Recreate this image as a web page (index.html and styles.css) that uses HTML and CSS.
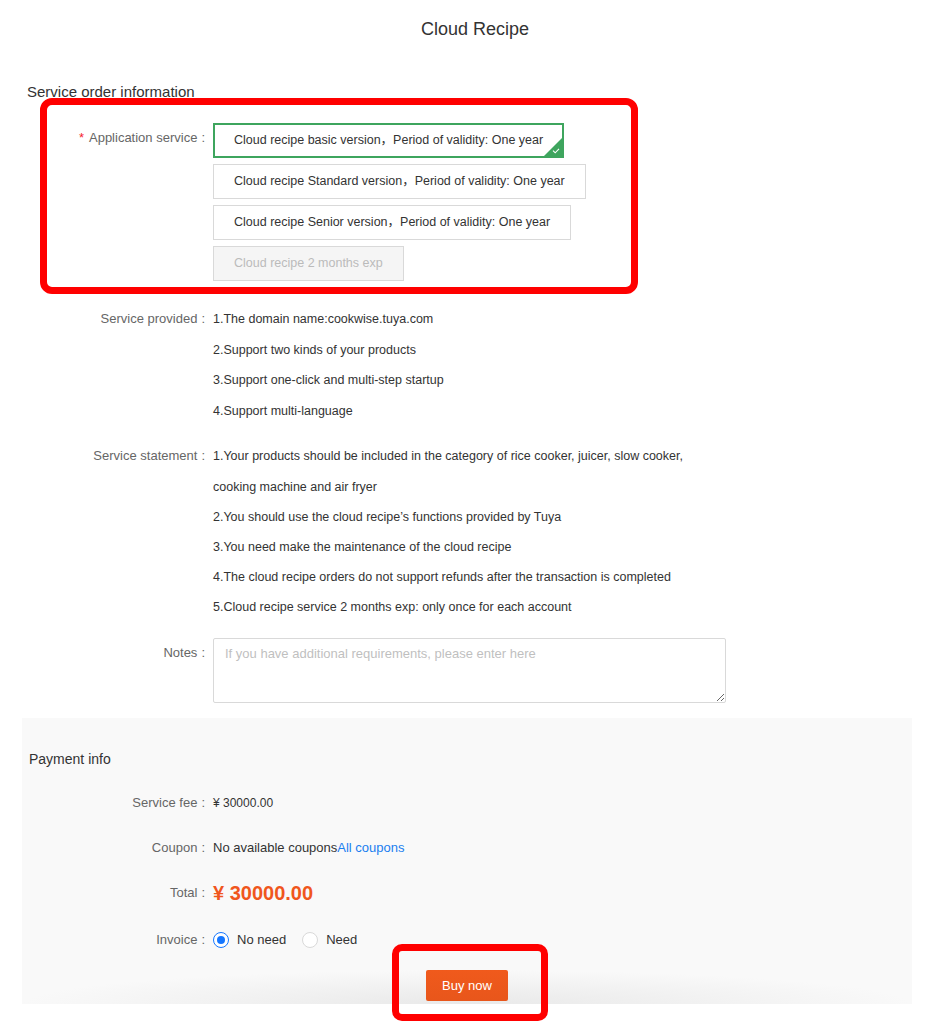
FILE: index.html
```html
<!DOCTYPE html>
<html lang="en">
<head>
<meta charset="UTF-8">
<meta name="viewport" content="width=device-width, initial-scale=1.0">
<title>Cloud Recipe</title>
<link rel="stylesheet" href="styles.css">
</head>
<body>
  <div class="page">
    <h1 class="page-title">Cloud Recipe</h1>

    <div class="order">
      <h2 class="order-title">Service order information</h2>

      <div class="form-row service-row">
        <div class="form-label"><span class="required">*</span>Application service</div>
        <div class="options">
          <div class="option is-active">
            Cloud recipe basic version，Period of validity: One year
            <svg class="option-check" width="18" height="18" viewBox="0 0 18 18">
              <path d="M18 0 V18 H0 Z" fill="#3ea55e"/>
              <path d="M9 12.6 L11.2 14.8 L15 10.8" stroke="#fff" stroke-width="1.1" fill="none"/>
            </svg>
          </div>
          <div class="option">Cloud recipe Standard version，Period of validity: One year</div>
          <div class="option">Cloud recipe Senior version，Period of validity: One year</div>
          <div class="option is-disabled">Cloud recipe 2 months exp</div>
        </div>
      </div>

      <div class="form-row">
        <div class="form-label">Service provided</div>
        <ul class="info-list provided-list">
          <li>1.The domain name:cookwise.tuya.com</li>
          <li>2.Support two kinds of your products</li>
          <li>3.Support one-click and multi-step startup</li>
          <li>4.Support multi-language</li>
        </ul>
      </div>

      <div class="form-row">
        <div class="form-label">Service statement</div>
        <ul class="info-list statement-list">
          <li>1.Your products should be included in the category of rice cooker, juicer, slow cooker, cooking machine and air fryer</li>
          <li>2.You should use the cloud recipe’s functions provided by Tuya</li>
          <li>3.You need make the maintenance of the cloud recipe</li>
          <li>4.The cloud recipe orders do not support refunds after the transaction is completed</li>
          <li>5.Cloud recipe service 2 months exp: only once for each account</li>
        </ul>
      </div>

      <div class="form-row">
        <div class="form-label">Notes</div>
        <textarea class="notes" placeholder="If you have additional requirements, please enter here"></textarea>
      </div>
    </div>

    <div class="payment">
      <h2 class="payment-title">Payment info</h2>

      <div class="pay-row">
        <div class="form-label">Service fee</div>
        <div class="fee">¥ 30000.00</div>
      </div>
      <div class="pay-row">
        <div class="form-label">Coupon</div>
        <div class="pay-value">No available coupons<a class="link" href="#">All coupons</a></div>
      </div>
      <div class="pay-row">
        <div class="form-label">Total</div>
        <div class="total">¥ 30000.00</div>
      </div>
      <div class="pay-row invoice-row">
        <div class="form-label">Invoice</div>
        <div class="radios">
          <label class="radio"><span class="radio-dot is-checked"></span>No need</label>
          <label class="radio"><span class="radio-dot"></span>Need</label>
        </div>
      </div>

      <div class="actions">
        <button class="buy-button">Buy now</button>
      </div>
    </div>
  </div>

  <!-- annotation boxes -->
  <div class="mark mark-service"></div>
  <div class="mark mark-buy"></div>
</body>
</html>
```

FILE: styles.css
```css
body {
  margin: 0;
  position: relative;
  background: #fff;
  font-family: "Liberation Sans", "Noto Sans CJK SC", Arial, sans-serif;
  font-size: 13px;
  color: #333;
}

.page {
  width: 890px;
  padding: 0 0 17px 22px;
}

.page-title {
  margin: 17px 0 0;
  padding-left: 16px;
  font-size: 18px;
  font-weight: normal;
  line-height: 24px;
  text-align: center;
  color: #333;
}

.order-title {
  margin: 41px 0 0 5px;
  font-size: 15px;
  font-weight: normal;
  line-height: 20px;
  color: #333;
}

.form-row {
  display: grid;
  grid-template-columns: 183px 1fr;
  column-gap: 8px;
  margin-bottom: 15px;
}

.service-row {
  margin-top: 21px;
  margin-bottom: 23px;
}

.form-label {
  text-align: right;
  line-height: 30px;
  color: #666;
}

.form-label::after {
  content: ":";
  margin-left: 4px;
}

.required {
  color: #f5222d;
  margin-right: 5px;
}

/* service options */
.options {
  display: flex;
  flex-direction: column;
  align-items: flex-start;
  gap: 6px;
}

.option {
  position: relative;
  box-sizing: border-box;
  height: 35px;
  line-height: 33px;
  padding: 0 20px;
  border: 1px solid #d9d9d9;
  background: #fff;
  color: #333;
  font-size: 12.5px;
  white-space: nowrap;
}

.option.is-active {
  border: 2px solid #3ea55e;
  line-height: 31px;
  padding: 0 19px;
}

.option.is-disabled {
  background: #f5f5f5;
  color: #bbb;
}

.option-check {
  position: absolute;
  right: 0;
  bottom: 0;
  display: block;
}

.info-list {
  width: 505px;
  margin: 0;
  padding: 0;
  list-style: none;
  font-size: 12.5px;
  line-height: 30.5px;
  color: #333;
}

.provided-list {
  line-height: 30.6px;
}

.statement-list {
  line-height: 30.2px;
}

.notes {
  box-sizing: border-box;
  width: 513px;
  height: 65px;
  padding: 6px 11px;
  border: 1px solid #d9d9d9;
  border-radius: 2px;
  font-family: inherit;
  font-size: 13px;
  line-height: 18px;
  color: #333;
}

.notes::placeholder {
  color: #bfbfbf;
}

/* payment */
.payment {
  margin-top: 15px;
  padding: 31px 7px 3px;
  background:
    radial-gradient(ellipse 50% 34px at 50% 100%, #e9e9e9, rgba(249, 249, 249, 0)),
    #f9f9f9;
}

.payment-title {
  margin: 0 0 19px;
  font-size: 14px;
  font-weight: normal;
  line-height: 20px;
  color: #333;
}

.pay-row {
  display: grid;
  grid-template-columns: 176px 1fr;
  column-gap: 8px;
  margin-bottom: 15px;
  line-height: 30px;
}

.invoice-row {
  margin-top: 17px;
}

.fee {
  font-size: 12px;
}

.link {
  color: #1a7ef0;
  text-decoration: none;
}

.total {
  font-size: 20px;
  font-weight: bold;
  color: #f0561d;
}

.radios {
  display: flex;
  align-items: center;
  gap: 16px;
}

.radio {
  display: flex;
  align-items: center;
  gap: 8px;
  color: #333;
}

.radio-dot {
  box-sizing: border-box;
  width: 16px;
  height: 16px;
  border: 1px solid #d9d9d9;
  border-radius: 50%;
  background: #fff;
  position: relative;
}

.radio-dot.is-checked {
  border-color: #1677ff;
}

.radio-dot.is-checked::after {
  content: "";
  position: absolute;
  left: 3px;
  top: 3px;
  width: 8px;
  height: 8px;
  border-radius: 50%;
  background: #1677ff;
}

.actions {
  display: flex;
  justify-content: center;
}

.buy-button {
  width: 82px;
  height: 31px;
  border: none;
  border-radius: 2px;
  background: linear-gradient(#f05a1c, #e8561b);
  color: #fff;
  font-family: inherit;
  font-size: 13px;
  cursor: pointer;
}

/* red annotation boxes */
.mark {
  position: absolute;
  box-sizing: border-box;
  border: 7px solid #ff0000;
  border-radius: 12px;
}

.mark-service {
  left: 40px;
  top: 98px;
  width: 598px;
  height: 196px;
}

.mark-buy {
  left: 392px;
  top: 944px;
  width: 156px;
  height: 77px;
  border-radius: 10px;
}
```
